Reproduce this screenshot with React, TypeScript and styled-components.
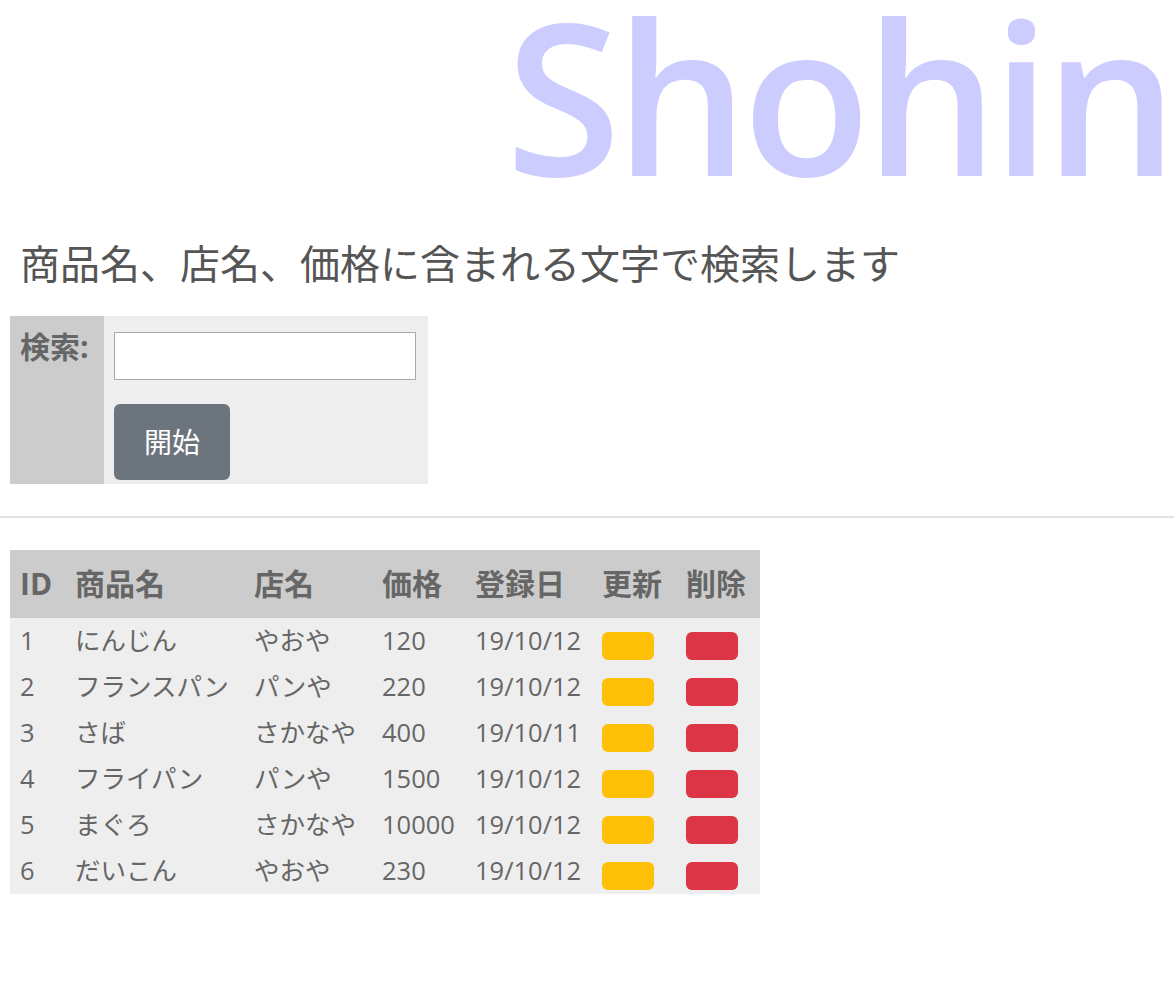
import React from "react";
import styled, { createGlobalStyle } from "styled-components";

const GlobalStyle = createGlobalStyle`
  html, body {
    margin: 0;
    padding: 0;
    background: #ffffff;
    font-family: "Open Sans", "Noto Sans CJK JP", sans-serif;
    color: #666666;
    overflow: hidden;
  }
`;

const Page = styled.div`
  display: flex;
  flex-direction: column;
  width: 1174px;
`;

const Title = styled.h1`
  margin: 0;
  padding-right: 2px;
  font-family: "Open Sans", sans-serif;
  font-weight: 600;
  font-size: 210px;
  line-height: 190px;
  letter-spacing: -6px;
  color: #ccccff;
  text-align: right;
  white-space: nowrap;
`;

const Lead = styled.p`
  margin: 50px 0 0 20px;
  font-family: "Open Sans", "Noto Sans CJK JP", sans-serif;
  font-size: 40px;
  line-height: 48px;
  color: #555555;
`;

const SearchTable = styled.table`
  margin: 28px 0 0 10px;
  border-collapse: collapse;
  align-self: flex-start;
`;

const SearchLabel = styled.th`
  width: 74px;
  padding: 10px;
  background: #cccccc;
  vertical-align: top;
  text-align: left;
  font-size: 30px;
  line-height: 42px;
  font-weight: 700;
  color: #666666;
  white-space: nowrap;
`;

const SearchCell = styled.td`
  padding: 16px 12px 4px 10px;
  background: #eeeeee;
  display: flex;
  flex-direction: column;
  align-items: flex-start;
  gap: 24px;
`;

const SearchInput = styled.input`
  box-sizing: border-box;
  width: 302px;
  height: 48px;
  margin: 0;
  border: 1px solid #aaaaaa;
  background: #ffffff;
  font-size: 24px;
`;

const StartButton = styled.button`
  box-sizing: border-box;
  width: 116px;
  height: 76px;
  border: none;
  border-radius: 6px;
  background: #6c757d;
  color: #ffffff;
  font-family: "Open Sans", "Noto Sans CJK JP", sans-serif;
  font-size: 28px;
  line-height: 1;
  padding: 0;
`;

const Rule = styled.hr`
  width: 100%;
  margin: 32px 0 0 0;
  border: none;
  height: 2px;
  background: #e2e2e2;
`;

const ListTable = styled.table`
  margin: 32px 0 0 10px;
  width: 750px;
  border-collapse: collapse;
  table-layout: fixed;
  align-self: flex-start;
`;

const Col = styled.col<{ $w: number }>`
  width: ${(p) => p.$w}px;
`;

const HeadCell = styled.th`
  height: 68px;
  padding: 0 10px;
  background: #cccccc;
  text-align: left;
  vertical-align: middle;
  font-size: 30px;
  line-height: 1;
  font-weight: 700;
  color: #666666;
  white-space: nowrap;
`;

const Cell = styled.td`
  height: 46px;
  padding: 0 10px;
  background: #eeeeee;
  vertical-align: middle;
  font-size: 25.5px;
  line-height: 1;
  color: #666666;
  white-space: nowrap;
`;

const ActionButton = styled.button<{ $tone: "edit" | "delete" }>`
  display: block;
  width: 52px;
  height: 28px;
  margin: 10px 0 0 0;
  padding: 0;
  border: none;
  border-radius: 6px;
  background: ${(p) => (p.$tone === "edit" ? "#ffc107" : "#dc3545")};
`;

const rows = [
  { id: 1, name: "にんじん", shop: "やおや", price: 120, date: "19/10/12" },
  { id: 2, name: "フランスパン", shop: "パンや", price: 220, date: "19/10/12" },
  { id: 3, name: "さば", shop: "さかなや", price: 400, date: "19/10/11" },
  { id: 4, name: "フライパン", shop: "パンや", price: 1500, date: "19/10/12" },
  { id: 5, name: "まぐろ", shop: "さかなや", price: 10000, date: "19/10/12" },
  { id: 6, name: "だいこん", shop: "やおや", price: 230, date: "19/10/12" },
];

const widths = [55, 179, 128, 93, 127, 84, 84];
const headers = ["ID", "商品名", "店名", "価格", "登録日", "更新", "削除"];

export default function App() {
  return (
    <Page>
      <GlobalStyle />
      <Title>Shohin</Title>
      <Lead>商品名、店名、価格に含まれる文字で検索します</Lead>
      <SearchTable>
        <tbody>
          <tr>
            <SearchLabel>検索:</SearchLabel>
            <SearchCell>
              <SearchInput type="text" />
              <StartButton type="button">開始</StartButton>
            </SearchCell>
          </tr>
        </tbody>
      </SearchTable>
      <Rule />
      <ListTable>
        <colgroup>
          {widths.map((w, i) => (
            <Col key={i} $w={w} />
          ))}
        </colgroup>
        <thead>
          <tr>
            {headers.map((h) => (
              <HeadCell key={h}>{h}</HeadCell>
            ))}
          </tr>
        </thead>
        <tbody>
          {rows.map((r) => (
            <tr key={r.id}>
              <Cell>{r.id}</Cell>
              <Cell>{r.name}</Cell>
              <Cell>{r.shop}</Cell>
              <Cell>{r.price}</Cell>
              <Cell>{r.date}</Cell>
              <Cell>
                <ActionButton type="button" $tone="edit" />
              </Cell>
              <Cell>
                <ActionButton type="button" $tone="delete" />
              </Cell>
            </tr>
          ))}
        </tbody>
      </ListTable>
    </Page>
  );
}
